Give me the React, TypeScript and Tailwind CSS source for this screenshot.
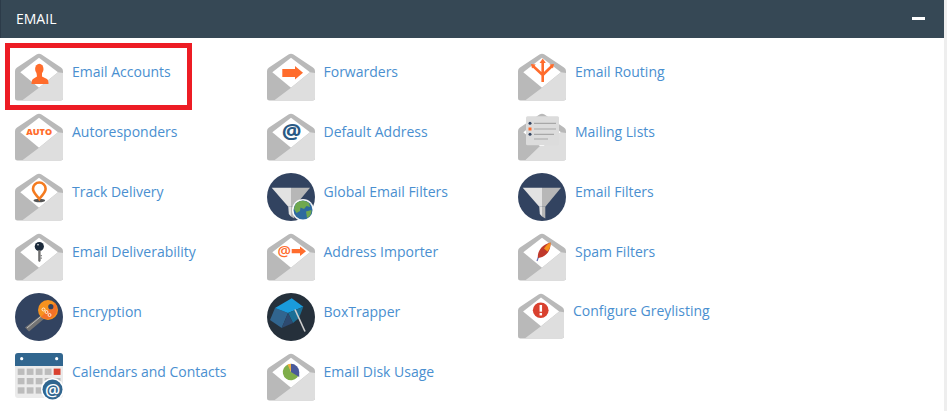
import React from "react";

const OR = "#ff6c2c";
const FONT = "'Open Sans', sans-serif";

function Env({ children, size = 48 }: { children?: React.ReactNode; size?: number }) {
  return (
    <svg width={size} height={size} viewBox="0 0 48 48" className="block shrink-0">
      <path d="M21.5 1.6Q24 0 26.5 1.6L46 14.5Q48 15.8 48 18V45Q48 47.5 45.5 47.5H2.5Q0 47.5 0 45V18Q0 15.8 2 14.5Z" fill="#b9b9b9" />
      <path d="M24 4.7L43 19.3L24 34.7L5.3 19.3Z" fill="#fff" />
      <path d="M48 20V45Q48 47.5 45.5 47.5H7L24 34.7L43 19.3Z" fill="#dedede" />
      {children}
    </svg>
  );
}

function Funnel() {
  return (
    <>
      <path d="M4.7 14.7H24V33.7H21.3Z" fill="#e2e2e2" />
      <path d="M24 14.7H43L27.3 33.7H24Z" fill="#b7b7b7" />
      <path d="M21.3 33.7H24V43.5L21.8 41Z" fill="#e2e2e2" />
      <path d="M24 33.7H27.3V45.5L24 43.5Z" fill="#b7b7b7" />
    </>
  );
}

function Circle({ fill = "#324360", children }: { fill?: string; children?: React.ReactNode }) {
  return (
    <svg width={48} height={48} viewBox="0 0 48 48" className="block shrink-0">
      <circle cx="24" cy="24" r="24" fill={fill} />
      {children}
    </svg>
  );
}

const T = ({ x, y, s, c, w = 700, children }: { x: number; y: number; s: number; c: string; w?: number; children: string }) => (
  <text x={x} y={y} fontSize={s} fill={c} fontWeight={w} textAnchor="middle" fontFamily={FONT}>{children}</text>
);

const icons: Record<string, React.ReactNode> = {
  accounts: (
    <Env>
      <ellipse cx="24.3" cy="16" rx="4.2" ry="5.2" fill={OR} />
      <path d="M21.5 20H27V23.5L32 26Q33.5 27 33.5 31H16.5Q16.5 27 18 26L22 23.5Z" fill={OR} />
    </Env>
  ),
  auto: <Env><T x={24.2} y={22.4} s={9} c={OR} w={800}>AUTO</T></Env>,
  track: (
    <Env>
      <ellipse cx="24.3" cy="27.5" rx="5.8" ry="1.8" fill="#555" />
      <path d="M24.3 26C21 21.5 18 19.5 18 15.8A6.3 6.3 0 0 1 30.6 15.8C30.6 19.5 27.6 21.5 24.3 26Z" fill="none" stroke="#f47b20" strokeWidth="2.6" />
    </Env>
  ),
  deliver: (
    <Env>
      <circle cx="24.3" cy="13.5" r="4.6" fill="#1c2b3c" />
      <circle cx="23" cy="11.8" r="0.8" fill="#fff" />
      <path d="M23.2 17H25.6V28L24.4 29L23.2 28Z" fill="#6f6f6f" />
      <path d="M25.6 22H26.8V23.2H25.6ZM25.6 24.6H26.8V25.8H25.6Z" fill="#6f6f6f" />
    </Env>
  ),
  encrypt: (
    <Circle>
      <path d="M27 21.5L30 25L14 38.5L10 34.5Z" fill="#737373" />
      <path d="M12 35L27 22.5" stroke="#c9c9c9" strokeWidth="0.9" />
      <circle cx="33" cy="17" r="10" fill="#f7921e" />
      <path d="M40 10A10 10 0 0 1 26 24Z" fill="#f26a2b" opacity="0.8" />
      <circle cx="35.8" cy="13.7" r="2.6" fill="#324360" />
      <circle cx="28.5" cy="16.5" r="1.5" fill="none" stroke="#fff" strokeWidth="0.8" />
      <circle cx="31.5" cy="19" r="1.5" fill="none" stroke="#fff" strokeWidth="0.8" />
      <circle cx="34.5" cy="22" r="1.5" fill="none" stroke="#fff" strokeWidth="0.8" />
    </Circle>
  ),
  calendar: (
    <svg width={48} height={48} viewBox="0 0 48 48" className="block shrink-0">
      <rect x="0" y="0" width="48" height="45" rx="3" fill="#ebebeb" />
      <path d="M0 13V3Q0 0 3 0H45Q48 0 48 3V13Z" fill="#31668f" />
      <circle cx="6.7" cy="5.7" r="1.6" fill="#fff" />
      <circle cx="41.7" cy="5.7" r="1.6" fill="#fff" />
      {[15.6, 25, 34.3].flatMap((y) => [2.7, 11.7, 20.7, 29.7, 38.7].map((x) => (
        <rect key={`${x}-${y}`} x={x} y={y} width="6.8" height="6.3" fill={x === 38.7 && y === 15.6 ? "#d9412f" : "#bcbcbc"} />
      )))}
      <circle cx="37.5" cy="36.5" r="11.5" fill="#fff" />
      <circle cx="37.5" cy="36.5" r="10" fill="#31668f" />
      <T x={37.5} y={42.6} s={17} c="#fff" w={600}>@</T>
    </svg>
  ),
  forward: <Env><path d="M15.3 16H28V13L36 19.7L28 26.5V24H15.3Z" fill={OR} /></Env>,
  def: <Env><T x={24.7} y={25.5} s={22} c="#2a5a85">@</T></Env>,
  global: (
    <Circle>
      <Funnel />
      <circle cx="36" cy="37" r="11" fill="#fff" opacity="0.95" />
      <circle cx="36" cy="37" r="9.5" fill="#2d6a9f" />
      <path d="M30 29.5Q36 26 42 30L43 34L39.5 33L37 36L33.5 34.5L33 38L29.5 40L27 36Q27.5 31.5 30 29.5Z" fill="#6fa84f" />
      <path d="M39 38.5L44.5 37Q45 42 40 45Z" fill="#6fa84f" />
    </Circle>
  ),
  importer: (
    <Env>
      <T x={17.2} y={23} s={15} c={OR} w={600}>@</T>
      <path d="M24.7 16H33V13.5L39 18.2L33 23V20.3H24.7Z" fill={OR} />
    </Env>
  ),
  box: (
    <Circle fill="#25303b">
      <path d="M8 15L21 20L14.7 35L3 27Z" fill="#31658f" />
      <path d="M8 15L24.7 5.3L36.3 13.7L21 20Z" fill="#1a9bdc" />
      <path d="M21 20L36.3 13.7L32 25L26 30Z" fill="#1b6f96" />
      <path d="M21 20L26 30L14.7 35Z" fill="#2d4a70" />
      <path d="M28 16.5L38 38.5" stroke="#cfcfcf" strokeWidth="1.6" />
    </Circle>
  ),
  usage: (
    <Env>
      <path d="M24 19L21.5 11.3A8.2 8.2 0 1 0 32.2 19Z" fill="#7fae4a" />
      <path d="M24 19V10.8A8.2 8.2 0 0 1 32.2 19V24L24 19Z" fill="#4a5a9a" />
      <path d="M24 19L20.5 11.5A8.2 8.2 0 0 1 24 10.8Z" fill="#f0b040" />
    </Env>
  ),
  routing: (
    <Env>
      <path d="M24.7 29V9M24.7 22L15 13M24.7 22L34 13" stroke={OR} strokeWidth="2.6" fill="none" />
      <path d="M24.7 5.5L27.8 10H21.6Z" fill={OR} />
      <path d="M13 11L17.8 11.5L14 15.5ZM36 11L31.5 11.5L35 15.5Z" fill={OR} />
    </Env>
  ),
  lists: (
    <Env>
      <rect x="8" y="3.3" width="33" height="29" rx="1.5" fill="#dcdcdc" />
      <circle cx="12" cy="10.3" r="1.5" fill="#324360" />
      <rect x="10.5" y="14.5" width="3" height="3" fill={OR} />
      <circle cx="12" cy="21.3" r="1.5" fill="#324360" />
      <path d="M16 10.3H38M16 16H38M16 21.3H36M16 26H30" stroke="#a8a8a8" strokeWidth="1.2" />
      <path d="M48 20V45Q48 47.5 45.5 47.5H7L22 33H41V21Z" fill="#dedede" />
    </Env>
  ),
  filters: <Circle><Funnel /></Circle>,
  spam: (
    <Env>
      <path d="M19 28L21.5 21" stroke="#6a6fb0" strokeWidth="1.2" />
      <path d="M20 25C19 19 23 12 32.5 9.5C33 17 28.5 24 20 25Z" fill="#c0392b" />
      <path d="M26 15.5C28 12.5 30 10.5 32.5 9.5C33 12.5 31.5 16 29.5 18.5Z" fill="#f7921e" />
    </Env>
  ),
  grey: (
    <Env size={46}>
      <circle cx="23.7" cy="18" r="8.2" fill="#d9412f" />
      <rect x="22.5" y="12.5" width="2.6" height="7" fill="#fff" />
      <rect x="22.5" y="20.8" width="2.6" height="2.6" fill="#fff" />
    </Env>
  ),
};

const items: [string, string][] = [
  ["accounts", "Email Accounts"], ["forward", "Forwarders"], ["routing", "Email Routing"],
  ["auto", "Autoresponders"], ["def", "Default Address"], ["lists", "Mailing Lists"],
  ["track", "Track Delivery"], ["global", "Global Email Filters"], ["filters", "Email Filters"],
  ["deliver", "Email Deliverability"], ["importer", "Address Importer"], ["spam", "Spam Filters"],
  ["encrypt", "Encryption"], ["box", "BoxTrapper"], ["grey", "Configure Greylisting"],
  ["calendar", "Calendars and Contacts"], ["usage", "Email Disk Usage"],
];

export default function App() {
  return (
    <div className="relative h-[411px] w-[947px] overflow-hidden bg-white font-['Open_Sans',sans-serif] text-[14px]">
      <div className="flex h-full w-full">
        <div className="w-[944px]">
          <header className="flex h-[38px] items-center justify-between border-l border-[#2c3b49] bg-[#364855] pb-[2px] pl-[15px] pr-[19px] text-white">
            <span>EMAIL</span>
            <span className="h-[3px] w-[13px] bg-white" />
          </header>
          <div className="grid grid-cols-[251.5px_251.5px_251.5px] pl-[15px] pt-[15px]">
            {items.map(([key, label]) => (
              <a key={key} href="#" className="flex h-[60px] items-start gap-[9px]">
                {icons[key]}
                <span className={key === "grey" ? "pt-[8px] leading-[20px] text-[#4a8fd0]" : "pt-[9px] leading-[20px] text-[#4a8fd0]"}>{label}</span>
              </a>
            ))}
          </div>
        </div>
        <div className="w-[3px] bg-[#eeeeee]" />
      </div>
      <div className="absolute left-[5px] top-[43px] h-[67px] w-[187px] border-[5px] border-[#ed1c24]" />
    </div>
  );
}
